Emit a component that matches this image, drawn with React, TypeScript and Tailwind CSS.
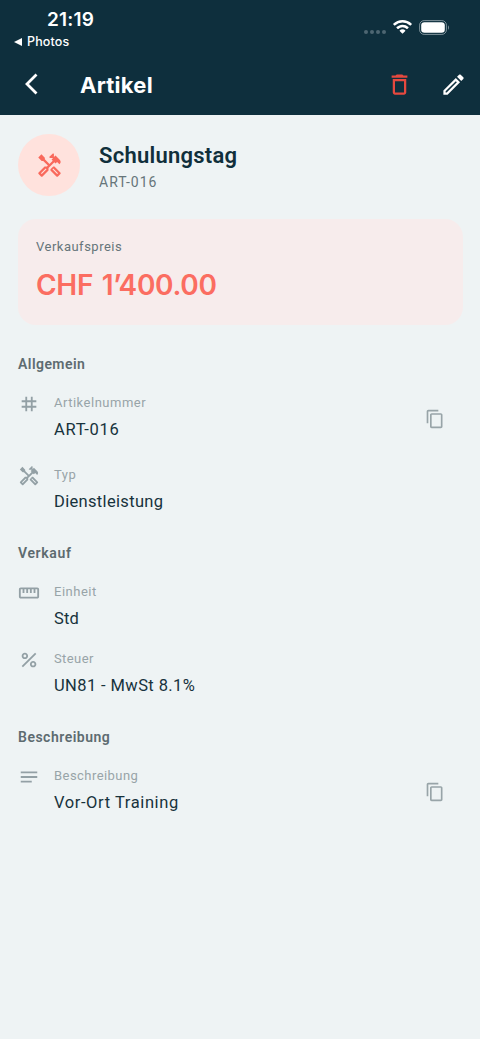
import React from 'react';
import {
  MdContentCopy,
  MdDeleteOutline,
  MdOutlineEdit,
  MdOutlineHandyman,
  MdOutlineStraighten,
  MdNotes,
  MdPercent,
  MdTag,
} from 'react-icons/md';
import type { IconType } from 'react-icons';

interface FieldProps {
  icon: IconType;
  label: string;
  labelClass: string;
  value: string;
  valueClass: string;
  copyable?: boolean;
  className?: string;
}

const Field: React.FC<FieldProps> = ({ icon: Icon, label, labelClass, value, valueClass, copyable, className = '' }) => (
  <div className={`flex h-[50px] ${className}`}>
    <Icon size={22} className="mt-[2.5px] shrink-0 text-[#93a0a5]" />
    <div className="ml-[14px] flex-1 whitespace-nowrap">
      <div className={`text-[13px] leading-[26px] text-[#98a4a8] ${labelClass}`}>{label}</div>
      <div className={`text-[16.5px] leading-[27px] text-[#17323c] ${valueClass}`}>{value}</div>
    </div>
    {copyable && (
      <button aria-label="Kopieren" className="mr-[18px] self-center pt-[8px]">
        <MdContentCopy size={20} className="text-[#98a4a8]" />
      </button>
    )}
  </div>
);

const SectionTitle: React.FC<{ children: React.ReactNode; className: string }> = ({ children, className }) => (
  <h3 className={`text-[14px] font-semibold leading-5 text-[#5d6b70] ${className}`}>{children}</h3>
);

const StatusBar: React.FC = () => (
  <div className="flex h-[54px] justify-between font-['Inter',sans-serif]">
    <div className="pl-[14px] pt-[8px]">
      <div className="pl-[33px] text-[19px] font-semibold leading-6 tracking-[0.2px]">21:19</div>
      <div className="mt-[1px] flex items-center gap-[5px] text-[12.5px] font-medium leading-[18px] tracking-[0.15px]">
        <svg width="8" height="8" viewBox="0 0 8 8" fill="currentColor">
          <path d="M0 4 8 0v8z" />
        </svg>
        Photos
      </div>
    </div>
    <div className="mr-[30px] mt-[17px] flex h-5 items-center">
      <div className="mr-[7px] mt-[10px] flex gap-[2px]">
        {[0, 1, 2, 3].map((dot) => (
          <span key={dot} className="size-1 rounded-full bg-[#4d6672]" />
        ))}
      </div>
      <svg width="19" height="14" viewBox="0 0 19 14" fill="currentColor" className="mr-[7px]">
        <path d="M9.5 0C5.9 0 2.6 1.4.2 3.7c-.2.2-.2.4 0 .6l1.2 1.2c.2.2.4.2.6 0a10.8 10.8 0 0 1 15 0c.2.2.4.2.6 0l1.2-1.2c.2-.2.2-.4 0-.6A13.5 13.5 0 0 0 9.5 0Z" />
        <path d="M9.5 4.7c-2.3 0-4.4.9-6 2.4-.2.2-.2.4 0 .6l1.2 1.2c.2.2.4.2.6 0a6.1 6.1 0 0 1 8.4 0c.2.2.4.2.6 0l1.2-1.2c.2-.2.2-.4 0-.6a8.7 8.7 0 0 0-6-2.4Z" />
        <path d="M9.5 9.3c-1.1 0-2.1.4-2.8 1.1-.2.2-.2.4 0 .6l2.5 2.6c.2.2.4.2.6 0l2.5-2.6c.2-.2.2-.4 0-.6-.7-.7-1.7-1.1-2.8-1.1Z" />
      </svg>
      <svg width="31" height="15" viewBox="0 0 31 15" fill="none">
        <rect x=".6" y=".6" width="26.8" height="13.8" rx="4.5" stroke="#7f929b" />
        <rect x="2.2" y="2.2" width="23.6" height="10.6" rx="3.2" fill="white" />
        <path d="M29 5.2c1.3.8 1.3 3.8 0 4.6z" fill="#7f929b" />
      </svg>
    </div>
  </div>
);

export default function App() {
  return (
    <div className="min-h-[1039px] w-[480px] bg-[#eef3f4] font-['Roboto',sans-serif]">
      <header className="h-[115px] bg-[#0e2f3d] text-white">
        <StatusBar />
        <div className="flex h-[60px] items-center pl-[24px] pr-[13px]">
          <button aria-label="Zurück">
            <svg width="15" height="24" viewBox="0 0 15 24" fill="none" stroke="currentColor" strokeWidth="2.8">
              <path d="M12.5 2.5 3 12l9.5 9.5" />
            </svg>
          </button>
          <h1 className="ml-[41px] flex-1 pt-[1px] font-['Inter',sans-serif] text-[22px] font-bold leading-7 tracking-[0.25px]">Artikel</h1>
          <button aria-label="Löschen" className="mr-[27px]">
            <MdDeleteOutline size={27} className="text-[#e5493f]" />
          </button>
          <button aria-label="Bearbeiten">
            <MdOutlineEdit size={27} />
          </button>
        </div>
      </header>

      <main className="pl-[18px] pr-[17px] pt-[19px]">
        <div className="flex h-[62px]">
          <div className="flex size-[62px] items-center justify-center rounded-full bg-[#ffe2dd]">
            <MdOutlineHandyman size={27} className="text-[#f9695c]" />
          </div>
          <div className="ml-[19px] pt-[8px]">
            <h2 className="text-[22px] font-semibold leading-7 tracking-[0.25px] text-[#102f3b]">Schulungstag</h2>
            <p className="mt-[2px] text-[14px] leading-5 tracking-[1px] text-[#66757a]">ART-016</p>
          </div>
        </div>

        <section className="mt-[23px] h-[106px] rounded-[18px] bg-[#f7ecec] pl-[18px] pt-[18px]">
          <div className="text-[13px] leading-5 tracking-[0.5px] text-[#66757a]">Verkaufspreis</div>
          <div className="mt-[10px] font-['Inter',sans-serif] text-[28px] font-semibold leading-9 tracking-[-0.3px] text-[#fb6d61] [word-spacing:2px]">CHF 1’400.00</div>
        </section>

        <section className="mt-[29px]">
          <SectionTitle className="tracking-[0.45px]">Allgemein</SectionTitle>
          <Field icon={MdTag} label="Artikelnummer" labelClass="tracking-[0.5px]" value="ART-016" valueClass="tracking-[0.7px]" copyable className="mt-[16px]" />
          <Field icon={MdOutlineHandyman} label="Typ" labelClass="tracking-[0.5px]" value="Dienstleistung" valueClass="tracking-[0.33px]" className="mt-[22px]" />
        </section>

        <section className="mt-[31px]">
          <SectionTitle className="tracking-[0.65px]">Verkauf</SectionTitle>
          <Field icon={MdOutlineStraighten} label="Einheit" labelClass="tracking-[0.5px]" value="Std" valueClass="tracking-[0.2px]" className="mt-[16px]" />
          <Field icon={MdPercent} label="Steuer" labelClass="tracking-[0.4px]" value="UN81 - MwSt 8.1%" valueClass="tracking-[0.4px]" className="mt-[17px]" />
        </section>

        <section className="mt-[31px]">
          <SectionTitle className="tracking-[0.5px]">Beschreibung</SectionTitle>
          <Field icon={MdNotes} label="Beschreibung" labelClass="tracking-[0.45px]" value="Vor-Ort Training" valueClass="tracking-[0.6px]" copyable className="mt-[16px]" />
        </section>
      </main>
    </div>
  );
}
